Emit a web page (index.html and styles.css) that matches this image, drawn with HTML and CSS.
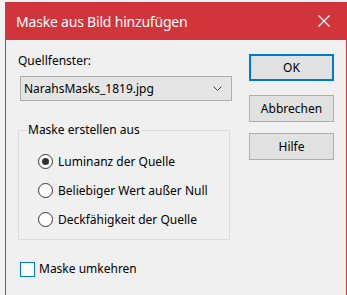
FILE: index.html
```html
<!DOCTYPE html>
<html lang="de">
<head>
  <meta charset="UTF-8">
  <title>Maske aus Bild hinzufügen</title>
  <link rel="stylesheet" href="styles.css">
</head>
<body>
  <div class="dialog">
    <div class="titlebar">
      <span class="title">Maske aus Bild hinzufügen</span>
      <svg class="close" width="12" height="12" viewBox="0 0 12 12">
        <path d="M0.5 0.5 L11.5 11.5 M11.5 0.5 L0.5 11.5" stroke="#fff" stroke-width="1.2" fill="none"/>
      </svg>
    </div>
    <div class="content">
      <div class="main">
        <div class="field-label">Quellfenster:</div>
        <div class="select">
          <span class="select-text">NarahsMasks_1819.jpg</span>
          <svg class="chevron" width="9" height="5" viewBox="0 0 9 5">
            <path d="M0.5 0.5 L4.5 4.5 L8.5 0.5" stroke="#444" stroke-width="1" fill="none"/>
          </svg>
        </div>
        <fieldset class="group">
          <legend>Maske erstellen aus</legend>
          <div class="radio checked"><span class="circle"></span>Luminanz der Quelle</div>
          <div class="radio"><span class="circle"></span>Beliebiger Wert außer Null</div>
          <div class="radio"><span class="circle"></span>Deckfähigkeit der Quelle</div>
        </fieldset>
        <div class="check"><span class="box"></span>Maske umkehren</div>
      </div>
      <div class="buttons">
        <div class="btn default">OK</div>
        <div class="btn">Abbrechen</div>
        <div class="btn">Hilfe</div>
      </div>
    </div>
  </div>
</body>
</html>
```

FILE: styles.css
```css
/*reset*/
body, div, fieldset, legend {
    padding: 0;
    margin: 0;
}

body {
    background: #f3f3f3;
    font-family: "Noto Sans", "Liberation Sans", sans-serif;
    font-size: 12px;
    color: #000;
    overflow: hidden;
}

/*dialog*/
.dialog {
    margin: 2px 0 0 5px;
    height: 293px;
    background: #f0f0f0;
    border-left: 1px solid #d1343a;
    border-right: 1px solid #d1343a;
    box-sizing: border-box;
}

.titlebar {
    height: 38px;
    margin: 0 -1px;
    padding: 0 17px 0 11px;
    background: #d1343a;
    display: flex;
    align-items: center;
    justify-content: space-between;
}

.title {
    color: #fff;
    font-size: 14px;
    letter-spacing: -0.2px;
}

.content {
    display: flex;
    gap: 17px;
    padding: 13px 0 0 12px;
}

.main {
    width: 214px;
}

.field-label {
    line-height: 16px;
}

.select {
    margin: 7px 0 0 2px;
    height: 25px;
    box-sizing: border-box;
    border: 1px solid #adadad;
    background: #e5e5e5;
    display: flex;
    align-items: center;
    justify-content: space-between;
    padding: 0 9px 0 3px;
}

.group {
    margin-top: 21px;
    width: 212px;
    box-sizing: border-box;
    border: 1px solid #dcdcdc;
    padding: 9px 0 5px 19px;
}

.group legend {
    margin-left: -11px;
    line-height: 16px;
    padding: 0 1px;
}

.radio {
    height: 29px;
    display: flex;
    align-items: center;
}

.circle {
    width: 13px;
    height: 13px;
    border: 1px solid #333;
    border-radius: 50%;
    background: #fff;
    margin-right: 5px;
    display: flex;
    align-items: center;
    justify-content: center;
}

.radio.checked .circle::after {
    content: "";
    width: 7px;
    height: 7px;
    border-radius: 50%;
    background: #333;
}

.check {
    margin: 21px 0 0 2px;
    display: flex;
    align-items: center;
    line-height: 16px;
}

.box {
    width: 15px;
    height: 15px;
    box-sizing: border-box;
    border: 1px solid #0078d7;
    background: #fff;
    margin-right: 4px;
}

/*buttons*/
.buttons {
    width: 85px;
    padding-top: 1px;
    display: flex;
    flex-direction: column;
}

.btn {
    height: 27px;
    box-sizing: border-box;
    border: 1px solid #adadad;
    background: #e1e1e1;
    display: flex;
    align-items: center;
    justify-content: center;
    margin-bottom: 11px;
}

.btn.default {
    border: 2px solid #0078d7;
    margin-bottom: 14px;
}
```
